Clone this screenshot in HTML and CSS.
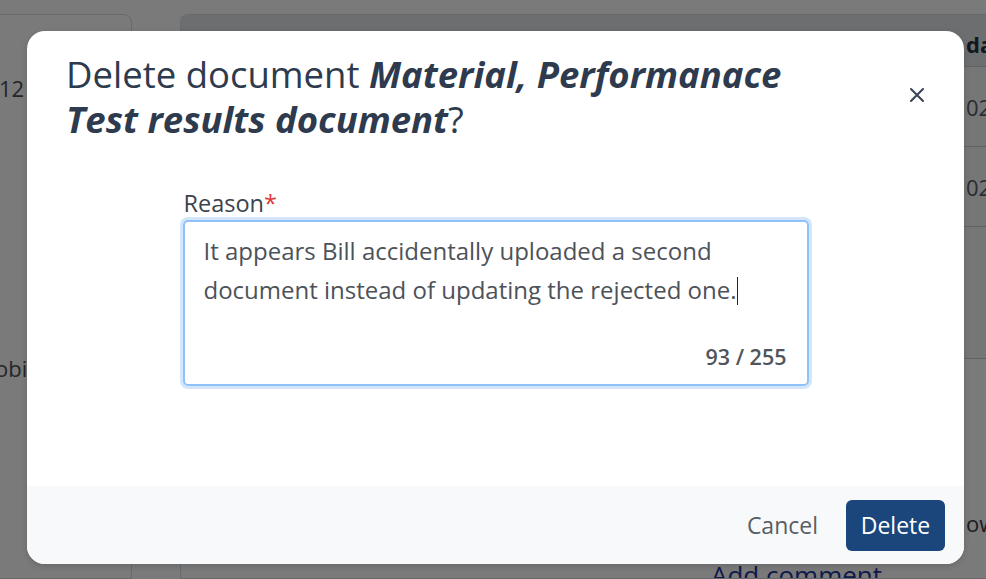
FILE: index.html
```html
<!DOCTYPE html>
<html lang="en">
<head>
<meta charset="utf-8">
<title>Delete document</title>
<link rel="stylesheet" href="styles.css">
</head>
<body>
<div class="page">
  <aside class="side-card">
    <div class="side-num">12</div>
    <div class="side-text">obile</div>
  </aside>
  <section class="main-card">
    <div class="tbl-head"><span class="cell">date</span></div>
    <div class="tbl-row"><span class="cell muted">02-2024</span></div>
    <div class="tbl-row"><span class="cell muted">02-2024</span></div>
    <div class="tbl-row tall"></div>
    <div class="lower">
      <div class="lower-row"><span class="cell">own</span></div>
      <a class="add-link" href="#">Add comment</a>
    </div>
  </section>
</div>

<div class="overlay">
  <div class="modal" role="dialog">
    <header class="modal-head">
      <h1 class="modal-title">Delete document <em>Material, Performanace Test results document</em>?</h1>
      <button class="close-btn" aria-label="Close">
        <svg width="16" height="16" viewBox="0 0 16 16"><path d="M2 2 L14 14 M14 2 L2 14" stroke="#3a4556" stroke-width="2.1" stroke-linecap="round" fill="none"/></svg>
      </button>
    </header>
    <div class="modal-body">
      <div class="field">
        <label class="field-label">Reason<span class="req">*</span></label>
        <div class="textbox">
          <div class="textbox-text">It appears Bill accidentally uploaded a second document instead of updating the rejected one.<span class="caret"></span></div>
          <div class="counter">93 / 255</div>
        </div>
      </div>
    </div>
    <footer class="modal-foot">
      <button class="btn-cancel">Cancel</button>
      <button class="btn-delete">Delete</button>
    </footer>
  </div>
</div>
</body>
</html>
```

FILE: styles.css
```css
* { box-sizing: border-box; }
html, body { margin: 0; padding: 0; }
body {
  width: 986px;
  height: 579px;
  overflow: hidden;
  position: relative;
  background: #ffffff;
  font-family: "Open Sans", "Noto Sans", sans-serif;
}

/* background page */
.page {
  display: flex;
  gap: 48px;
  padding-top: 14px;
  margin-left: -10px;
  height: 579px;
  overflow: hidden;
}
.side-card {
  width: 142px;
  flex: none;
  border: 1px solid #d8dde3;
  border-radius: 0 8px 0 0;
  background: #ffffff;
  padding-top: 58px;
  font-size: 22px;
  color: #4a5058;
  overflow: hidden;
}
.side-num { padding-left: 8px; line-height: 30px; }
.side-text { margin-top: 250px; padding-left: 4px; line-height: 30px; }
.main-card {
  flex: 1;
  min-width: 0;
  border: 1px solid #d8dde3;
  border-right: none;
  border-radius: 8px 0 0 0;
  background: #ffffff;
  display: flex;
  flex-direction: column;
  font-size: 22px;
  overflow: hidden;
}
.cell { display: block; padding-left: 785px; white-space: nowrap; }
.muted { color: #5a6068; }
.tbl-head {
  flex: none;
  height: 51px;
  background: #e4e7eb;
  display: flex;
  align-items: center;
  padding-top: 6px;
  font-weight: 700;
  color: #2a3140;
}
.tbl-row {
  flex: none;
  height: 80px;
  border-top: 1px solid #c9ced6;
  display: flex;
  align-items: center;
  background: #f6f7f9;
}
.tbl-row.tall { height: 132px; }
.lower {
  flex: none;
  border-top: 1px solid #c9ced6;
  display: flex;
  flex-direction: column;
  padding-top: 149px;
}
.lower-row { color: #3a4048; line-height: 30px; }
.add-link {
  margin-top: 20px;
  padding-left: 530px;
  font-size: 26px;
  line-height: 34px;
  color: #24389a;
  text-decoration: none;
  white-space: nowrap;
}

/* overlay + modal */
.overlay {
  position: absolute;
  inset: 0;
  background: rgba(0, 0, 0, 0.52);
  display: flex;
  align-items: flex-start;
  padding: 31px 0 0 27px;
}
.modal {
  width: 937px;
  height: 533px;
  background: #ffffff;
  border-radius: 18px;
  box-shadow: 0 2px 6px rgba(0,0,0,0.15);
  display: flex;
  flex-direction: column;
  overflow: hidden;
}
.modal-head {
  display: flex;
  align-items: center;
  justify-content: space-between;
  padding: 21px 39px 0 39px;
}
.modal-title {
  margin: 0;
  width: 770px;
  font-size: 36.5px;
  line-height: 45px;
  font-weight: 400;
  color: #2e3a4d;
}
.modal-title em { font-weight: 700; font-style: italic; }
.close-btn {
  border: none;
  background: none;
  padding: 0;
  width: 16px;
  height: 16px;
  margin-top: -4px;
}
.close-btn svg { display: block; }

.modal-body {
  flex: 1;
  display: flex;
  justify-content: center;
  padding-top: 47px;
}
.field { width: 626px; display: flex; flex-direction: column; }
.field-label {
  font-size: 23.5px;
  line-height: 28px;
  color: #3c434c;
  padding-left: 1px;
  margin-bottom: 3px;
}
.req { color: #e03a3a; }
.textbox {
  height: 166px;
  border: 2px solid #8ec2f9;
  border-radius: 5px;
  box-shadow: 0 0 0 3px #d3e6fc;
  padding: 9px 20px 15px 19px;
  display: flex;
  flex-direction: column;
  justify-content: space-between;
}
.textbox-text {
  font-size: 24px;
  line-height: 39px;
  color: #4d5259;
}
.caret {
  display: inline-block;
  width: 1.5px;
  height: 28px;
  background: #222;
  vertical-align: -6px;
}
.counter {
  text-align: right;
  font-size: 21.5px;
  font-weight: 600;
  color: #50555c;
  line-height: 24px;
}

.modal-foot {
  height: 78px;
  background: #f8f9fb;
  display: flex;
  align-items: center;
  justify-content: flex-end;
  gap: 14px;
  padding-right: 19px;
}
.btn-cancel {
  border: none;
  background: none;
  font-family: inherit;
  font-size: 23px;
  color: #585d64;
  padding: 0 14px;
  height: 51px;
}
.btn-delete {
  border: none;
  font-family: inherit;
  font-size: 23px;
  color: #ffffff;
  background: #1a467c;
  border-radius: 6px;
  width: 99px;
  height: 51px;
}
```
